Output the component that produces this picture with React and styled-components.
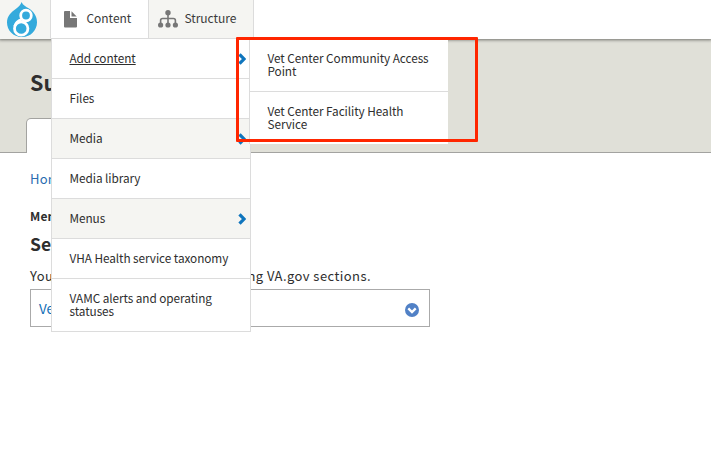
import React from "react";
import styled, { createGlobalStyle, css } from "styled-components";

const Global = createGlobalStyle`
  * { box-sizing: border-box; }
  html, body { margin: 0; padding: 0; background: #fff; }
  body {
    font-family: "Noto Sans CJK SC", "Noto Sans", sans-serif;
    color: #2e2e2e;
    overflow: hidden;
  }
  ul, h1, h2, p { margin: 0; padding: 0; }
`;

const Page = styled.div`
  position: relative;
  width: 711px;
  height: 449px;
  overflow: hidden;
  background: #fff;
`;

const Toolbar = styled.nav`
  position: relative;
  display: flex;
  height: 39px;
  background: #fff;
  box-shadow: 0 0 3px 1px rgba(0, 0, 0, 0.5);
`;

const ToolbarItem = styled.div`
  display: flex;
  align-items: center;
  width: ${(p) => p.$width}px;
  height: 39px;
  padding-left: ${(p) => p.$pad}px;
  border-right: 1px solid #dcdcdc;
  border-bottom: 1px solid ${(p) => (p.$line ? "#dcdcdc" : "transparent")};
  background: ${(p) => (p.$shaded ? "#f5f5f2" : "#fff")};
  svg { flex: none; display: block; }
`;

const ToolbarLabel = styled.span`
  margin: 0 0 2px ${(p) => p.$gap}px;
  font-size: 12px;
  line-height: 16px;
  letter-spacing: -0.05px;
  white-space: nowrap;
  color: #3b3b3b;
`;

const Header = styled.header`
  display: flex;
  flex-direction: column;
  justify-content: space-between;
  height: 114px;
  padding-left: 30px;
  border-bottom: 1px solid #a3a3a0;
  background: #e0e0d8;
`;

const PageTitle = styled.h1`
  padding-top: 27px;
  font-size: 21.5px;
  line-height: 32px;
  font-weight: 700;
`;

const Tab = styled.div`
  width: 140px;
  height: 35px;
  margin: 0 0 -1px -4px;
  border: 1px solid #a3a3a0;
  border-bottom: 0;
  border-radius: 5px 5px 0 0;
  background: #fff;
`;

const Main = styled.main`
  display: flex;
  flex-direction: column;
  align-items: flex-start;
  padding: 16px 0 0 30px;
`;

const Breadcrumb = styled.span`
  font-size: 13px;
  line-height: 20px;
  letter-spacing: 0.2px;
  color: #2a6cb0;
`;

const MenuHeading = styled.p`
  margin-top: 17px;
  font-size: 12px;
  line-height: 20px;
  letter-spacing: 0.2px;
  font-weight: 700;
`;

const SectionHeading = styled.h2`
  margin-top: 6px;
  font-size: 17.5px;
  line-height: 24px;
  font-weight: 700;
`;

const Description = styled.p`
  display: flex;
  justify-content: space-between;
  width: 341px;
  margin-top: 10px;
  font-size: 13px;
  line-height: 20px;
  letter-spacing: 0.43px;
  white-space: nowrap;
`;

const SelectBox = styled.div`
  display: flex;
  align-items: center;
  justify-content: space-between;
  width: 400px;
  height: 38px;
  margin-top: 3px;
  padding: 0 10px 0 8px;
  border: 1px solid #aaa;
  font-size: 13.5px;
  color: #0f6db5;
  svg { display: block; margin-top: 4px; }
`;

const menuBox = css`
  position: absolute;
  top: 39px;
  list-style: none;
  background: #fff;
`;

const Menu = styled.ul`
  ${menuBox}
  left: 51px;
  width: 200px;
  border: 1px solid #dcdcdc;
  border-top: 0;
  border-bottom: 0;
`;

const Submenu = styled.ul`
  ${menuBox}
  left: 249px;
  width: 199px;
  height: 105px;
  overflow: hidden;
  border-left: 1px solid #dcdcdc;
`;

const MenuItem = styled.li`
  display: flex;
  align-items: flex-start;
  justify-content: space-between;
  min-height: 40px;
  padding: 12px 4px 14px 17.5px;
  border-bottom: 1px solid #dcdcdc;
  background: ${(p) => (p.$shaded ? "#f5f5f2" : "#fff")};
  font-size: 11.8px;
  line-height: 13px;
  letter-spacing: -0.07px;
  white-space: nowrap;
  svg { display: block; margin: 2px 0 -2px; }
  &:last-child { border-bottom-color: ${(p) => (p.$open ? "#fff" : "#dcdcdc")}; }
`;

const ItemText = styled.span`
  white-space: pre-line;
  text-decoration: ${(p) => (p.$active ? "underline" : "none")};
  text-underline-offset: 1px;
`;

const Highlight = styled.div`
  position: absolute;
  left: 236px;
  top: 37px;
  width: 242px;
  height: 105px;
  border: 3px solid #ff2600;
  border-radius: 1px;
`;

const DrupalIcon = () => (
  <svg width="32" height="38" viewBox="0 0 32 38">
    <path
      fill="#34aadc"
      d="M14.500 2c1.500 3.500 4.500 4.500 7.500 6.600 5 3.400 8 7.900 8 13.600C30 30 24 37 15 37S0 30.300 0 22.300c0-6.300 4.200-10.300 8.700-13.400C12 6.700 14 4.500 14.500 2z"
    />
    <circle cx="14.200" cy="28.500" r="6.700" fill="none" stroke="#fff" strokeWidth="2.800" />
    <circle cx="19" cy="15.500" r="5.300" fill="#34aadc" stroke="#fff" strokeWidth="2.800" />
    <path d="M14.500 19.500q-5.500 2-7 7" fill="none" stroke="#fff" strokeWidth="2.600" />
  </svg>
);

const FileIcon = () => (
  <svg width="13" height="17" viewBox="0 0 13 17" fill="#777">
    <path d="M1 0h5v7h7v8.500q0 1-1 1H1q-1 0-1-1V1q0-1 1-1z" />
    <path d="M7.500.300 12.700 5.600H7.500z" />
  </svg>
);

const StructureIcon = () => (
  <svg width="20" height="18" viewBox="0 0 20 18" fill="#777">
    <circle cx="10" cy="2.700" r="2.700" />
    <circle cx="2.600" cy="15" r="2.600" />
    <circle cx="10" cy="15" r="2.600" />
    <circle cx="17.400" cy="15" r="2.600" />
    <path d="M10 3v11M2.600 14v-3.500q0-2 2-2h10.800q2 0 2 2V14" fill="none" stroke="#777" strokeWidth="1.600" />
  </svg>
);

const Chevron = () => (
  <svg width="8" height="12" viewBox="0 0 8 12">
    <path d="M1.500 1.300 6 6l-4.500 4.700" fill="none" stroke="#0f75bd" strokeWidth="3.200" />
  </svg>
);

const SelectIcon = () => (
  <svg width="14" height="14" viewBox="0 0 14 14">
    <circle cx="7" cy="7" r="7" fill="#5181c6" />
    <path d="m3.300 5.400 3.700 3.700 3.700-3.700" fill="none" stroke="#fff" strokeWidth="2.300" />
  </svg>
);

const menuItems = [
  { label: "Add content", active: true, arrow: true },
  { label: "Files" },
  { label: "Media", shaded: true, arrow: true },
  { label: "Media library" },
  { label: "Menus", shaded: true, arrow: true },
  { label: "VHA Health service taxonomy" },
  { label: "VAMC alerts and operating\nstatuses" },
];

const submenuItems = [
  "Vet Center Community Access\nPoint",
  "Vet Center Facility Health\nService",
];

export default function App() {
  return (
    <Page>
      <Global />
      <Toolbar>
        <ToolbarItem $width={51} $pad={7} $shaded>
          <DrupalIcon />
        </ToolbarItem>
        <ToolbarItem $width={98} $pad={13} $line>
          <FileIcon />
          <ToolbarLabel $gap={9.5}>Content</ToolbarLabel>
        </ToolbarItem>
        <ToolbarItem $width={105} $pad={9} $line $shaded>
          <StructureIcon />
          <ToolbarLabel $gap={6.5}>Structure</ToolbarLabel>
        </ToolbarItem>
      </Toolbar>
      <Header>
        <PageTitle>Su</PageTitle>
        <Tab />
      </Header>
      <Main>
        <Breadcrumb>Hom</Breadcrumb>
        <MenuHeading>Mem</MenuHeading>
        <SectionHeading>Sec</SectionHeading>
        <Description>
          <span>You</span>
          <span>ing VA.gov sections.</span>
        </Description>
        <SelectBox>
          <span>Vet</span>
          <SelectIcon />
        </SelectBox>
      </Main>
      <Menu>
        {menuItems.map((item) => (
          <MenuItem key={item.label} $shaded={item.shaded}>
            <ItemText $active={item.active}>{item.label}</ItemText>
            {item.arrow && <Chevron />}
          </MenuItem>
        ))}
      </Menu>
      <Submenu>
        {submenuItems.map((label) => (
          <MenuItem key={label} $open>
            <ItemText>{label}</ItemText>
          </MenuItem>
        ))}
      </Submenu>
      <Highlight />
    </Page>
  );
}
